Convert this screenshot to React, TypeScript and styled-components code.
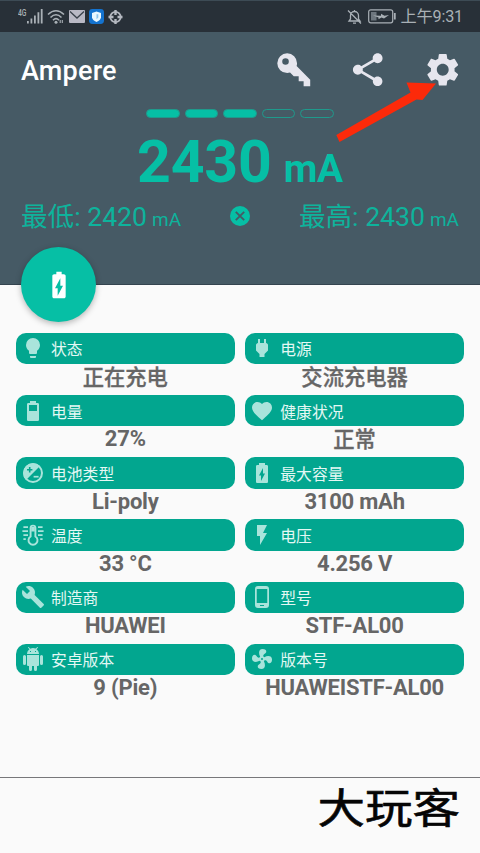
import React from 'react';
import styled, { createGlobalStyle } from 'styled-components';
import { MdSettings, MdShare, MdBuild, MdFavorite } from 'react-icons/md';

const GlobalStyle = createGlobalStyle`
  * { box-sizing: border-box; }
  body {
    margin: 0;
    background: #fafafa;
    font-family: Roboto, 'Noto Sans CJK SC', sans-serif;
  }
`;

const Screen = styled.div`
  position: relative;
  display: flex;
  flex-direction: column;
  width: 480px;
  height: 853px;
  overflow: hidden;
  background: #fafafa;
`;

const StatusBar = styled.div`
  display: flex;
  flex: none;
  align-items: center;
  justify-content: space-between;
  height: 32px;
  padding: 0 17px 0 18px;
  background: #283038;
  border-top: 1px solid #3d4b55;
  color: #a9b0b6;
`;

const StatusGroup = styled.div<{ $gap: number }>`
  display: flex;
  align-items: center;
  gap: ${(p) => p.$gap}px;
`;

const Clock = styled.span`
  margin-left: -1px;
  font-size: 16.2px;
  line-height: 20px;
  white-space: nowrap;
  letter-spacing: -0.2px;
  font-weight: 400;
`;

const Header = styled.header`
  flex: none;
  height: 253px;
  background: #465a65;
  border-bottom: 1px solid #34444f;
`;

const Toolbar = styled.div`
  display: flex;
  align-items: center;
  height: 76px;
  padding: 0 18px 0 21px;
`;

const Title = styled.h1`
  flex: 1;
  margin: 0;
  padding-top: 2px;
  color: #fff;
  font-size: 27px;
  font-weight: 500;
  letter-spacing: 0.2px;
  line-height: 32px;
`;

const Actions = styled.div`
  display: flex;
  gap: 35px;
  color: #e6e6ee;
  svg { display: block; }
`;

const Gauge = styled.div`
  display: flex;
  justify-content: center;
  gap: 5px;
  height: 9px;
  margin: 1px 0 0;
`;

const Segment = styled.div<{ $on: boolean }>`
  width: 33.6px;
  height: 9px;
  border: 1.4px solid #1f9a8c;
  border-radius: 4.5px;
  background: ${(p) => (p.$on ? '#06bfa5' : 'transparent')};
`;

const Reading = styled.div`
  display: flex;
  align-items: baseline;
  justify-content: center;
  gap: 12px;
  height: 79px;
  line-height: 88px;
  color: #06bfa5;
  font-size: 59px;
  font-weight: 700;
  letter-spacing: -0.2px;
`;

const ReadingUnit = styled.span`
  font-size: 38.8px;
`;

const Extremes = styled.div`
  display: grid;
  grid-template-columns: 1fr 20px 1fr;
  align-items: center;
  height: 38px;
  padding: 0 21px;
  color: #0eb39c;
`;

const Extreme = styled.div<{ $end?: boolean }>`
  padding-top: 1px;
  font-size: 26.6px;
  line-height: 38px;
  white-space: nowrap;
  text-align: ${(p) => (p.$end ? 'right' : 'left')};
  small { margin-left: 5px; font-size: 19px; }
`;

const ResetButton = styled.div`
  display: flex;
  height: 20px;
  margin-bottom: 5px;
`;

const Fab = styled.div`
  display: flex;
  flex: none;
  align-items: center;
  justify-content: center;
  position: relative;
  width: 75px;
  height: 75px;
  margin: -38px 0 0 21px;
  border-radius: 50%;
  background: #06bfa5;
  box-shadow: 0 2px 6px rgba(0, 0, 0, 0.28);
  color: #fff;
`;

const Grid = styled.main`
  display: grid;
  grid-template-columns: 218.6px 218.6px;
  grid-auto-rows: 62.2px;
  column-gap: 10.7px;
  padding: 10.8px 0 0 16px;
`;

const Card = styled.section`
  display: flex;
  flex-direction: column;
`;

const Label = styled.div`
  display: flex;
  align-items: center;
  height: 31.4px;
  padding-left: 5px;
  gap: 6px;
  border-radius: 10px;
  background: #02a68f;
  color: #a9e4db;
  svg { flex: none; }
  span {
    padding-top: 4px;
    color: #e4f8f4;
    font-size: 15.8px;
    line-height: 24px;
  }
`;

const Value = styled.div<{ $cjk?: boolean }>`
  height: 30.8px;
  color: #666;
  font-size: ${(p) => (p.$cjk ? 21.3 : 22)}px;
  font-weight: ${(p) => (p.$cjk ? 500 : 700)};
  letter-spacing: ${(p) => (p.$cjk ? 0 : -0.22)}px;
  line-height: ${(p) => (p.$cjk ? 28 : 26)}px;
  -webkit-text-stroke: ${(p) => (p.$cjk ? '0.3px #666' : '0')};
  text-align: center;
  white-space: nowrap;
`;

const Footer = styled.footer`
  display: flex;
  justify-content: flex-end;
  height: 76px;
  margin-top: auto;
  padding-right: 20px;
  border-top: 1.5px solid #77777a;
`;

const Brand = styled.div`
  height: 56px;
  margin-top: -2px;
  color: #050505;
  font-family: 'Noto Sans CJK SC', sans-serif;
  font-size: 47.5px;
  font-weight: 400;
  -webkit-text-stroke: 0.7px #050505;
  line-height: 60px;
  transform: scaleY(0.86);
`;

const Pointer = styled.svg`
  position: absolute;
  left: 330px;
  top: 78px;
`;

const PATHS = {
  key: 'M22,18V22H18V19H15V16H12L9.74,13.74C9.19,13.91 8.61,14 8,14A6,6 0 0,1 2,8A6,6 0 0,1 8,2A6,6 0 0,1 14,8C14,8.61 13.91,9.19 13.74,9.74L22,18M7,5A2,2 0 0,0 5,7A2,2 0 0,0 7,9A2,2 0 0,0 9,7A2,2 0 0,0 7,5Z',
  bulb: 'M12,2A7,7 0 0,0 5,9C5,11.38 6.19,13.47 8,14.74V17A1,1 0 0,0 9,18H15A1,1 0 0,0 16,17V14.74C17.81,13.47 19,11.38 19,9A7,7 0 0,0 12,2M9,21A1,1 0 0,0 10,22H14A1,1 0 0,0 15,21V20H9V21Z',
  plug: 'M16,7V3H14V7H10V3H8V7H8C7,7 6,8 6,9V14.5L9.5,18V21H14.5V18L18,14.5V9C18,8 17,7 16,7Z',
  batteryHalf: 'M16,12H8V6H16M16.67,4H15V2H9V4H7.33C6.6,4 6,4.6 6,5.33V20.67C6,21.4 6.6,22 7.33,22H16.67A1.33,1.33 0 0,0 18,20.67V5.33C18,4.6 17.4,4 16.67,4',
  batteryCharging: 'M16.67,4H15V2H9V4H7.33A1.33,1.33 0 0,0 6,5.33V20.66C6,21.4 6.6,22 7.33,22H16.66C17.4,22 18,21.4 18,20.67V5.33C18,4.6 17.4,4 16.67,4M11,20V14.5H9L13,7V12.5H15',
  fabBattery: 'M15.67 4H14V2h-4v2H8.33C7.6 4 7 4.6 7 5.33v15.33C7 21.4 7.6 22 8.33 22h7.33c.74 0 1.34-.6 1.34-1.33V5.33C17 4.6 16.4 4 15.67 4zM11 20v-5.5H9L13 7v5.5h2L11 20z',
  flash: 'M7,2V13H10V22L17,10H13L17,2H7Z',
  phone: 'M17.25,18H6.75V4H17.25M14,21H10V20H14M16,1H8A3,3 0 0,0 5,4V20A3,3 0 0,0 8,23H16A3,3 0 0,0 19,20V4A3,3 0 0,0 16,1Z',
  android: 'M15,5H14V4H15M10,5H9V4H10M15.53,2.16L16.84,0.85C17.03,0.66 17.03,0.34 16.84,0.14C16.64,-0.05 16.32,-0.05 16.13,0.14L14.65,1.62C13.85,1.23 12.95,1 12,1C11.04,1 10.14,1.23 9.34,1.63L7.85,0.14C7.66,-0.05 7.34,-0.05 7.15,0.14C6.95,0.34 6.95,0.66 7.15,0.85L8.46,2.16C6.97,3.26 6,5 6,7H18C18,5 17,3.25 15.53,2.16M20.5,8A1.5,1.5 0 0,0 19,9.5V16.5A1.5,1.5 0 0,0 20.5,18A1.5,1.5 0 0,0 22,16.5V9.5A1.5,1.5 0 0,0 20.5,8M3.5,8A1.5,1.5 0 0,0 2,9.5V16.5A1.5,1.5 0 0,0 3.5,18A1.5,1.5 0 0,0 5,16.5V9.5A1.5,1.5 0 0,0 3.5,8M6,18A1,1 0 0,0 7,19H8V22.5A1.5,1.5 0 0,0 9.5,24A1.5,1.5 0 0,0 11,22.5V19H13V22.5A1.5,1.5 0 0,0 14.5,24A1.5,1.5 0 0,0 16,22.5V19H17A1,1 0 0,0 18,18V8H6V18Z',
  fan: 'M12,11A1,1 0 0,0 11,12A1,1 0 0,0 12,13A1,1 0 0,0 13,12A1,1 0 0,0 12,11M12.5,2C17,2 17.11,5.57 14.75,6.75C13.76,7.24 13.32,8.29 13.13,9.22C13.61,9.42 14.03,9.73 14.35,10.13C18.05,8.13 22.03,8.92 22.03,12.5C22.03,17 18.46,17.1 17.28,14.73C16.78,13.74 15.72,13.3 14.79,13.11C14.59,13.59 14.28,14 13.88,14.34C15.87,18.03 15.08,22 11.5,22C7,22 6.91,18.42 9.27,17.24C10.25,16.75 10.69,15.71 10.89,14.79C10.4,14.59 9.97,14.27 9.65,13.87C5.96,15.85 2,15.07 2,11.5C2,7 5.56,6.89 6.74,9.26C7.24,10.25 8.29,10.68 9.22,10.87C9.41,10.39 9.73,9.97 10.14,9.65C8.15,5.96 8.94,2 12.5,2Z',
};

const Glyph = ({ d, size = 24 }: { d: string; size?: number }) => (
  <svg width={size} height={size} viewBox="0 0 24 24" fill="currentColor" fillRule="evenodd">
    <path d={d} />
  </svg>
);

const PolarityIcon = () => (
  <svg width="24" height="24" viewBox="0 0 24 24" fill="none" stroke="currentColor">
    <circle cx="12" cy="12" r="9" strokeWidth="2" />
    <path d="M5 19A9.9 9.9 0 0 1 19 5Z" fill="currentColor" stroke="none" />
    <path d="M6 8.7h5.4M8.7 6v5.4" stroke="#02a68f" strokeWidth="1.6" />
    <path d="M12.6 15.7h5" strokeWidth="1.7" />
  </svg>
);

const ThermometerIcon = () => (
  <svg width="24" height="24" viewBox="0 0 24 24" fill="none" stroke="currentColor">
    <path d="M9.6 13.5V5a2.4 2.4 0 0 1 4.8 0v8.5a4.5 4.5 0 1 1-4.8 0Z" strokeWidth="1.9" />
    <path d="M10.2 4h3.6v4.5h-3.6z" fill="currentColor" stroke="none" />
    <path d="M2.4 4.2h4.6M1.4 8.2H7M2.4 12.2H7M2.4 16.2h2.4M17 4.2h4.6M17 8.2h5.6M17 12.2h4.6M19.2 16.2h2.4" strokeWidth="1.7" />
  </svg>
);

const SignalIcon = () => (
  <svg width="25" height="18" viewBox="0 0 25 18" fill="currentColor">
    <text x="0" y="7.5" fontSize="8.5" fontWeight="500" textLength="8.5" lengthAdjust="spacingAndGlyphs">4G</text>
    <path d="M9 13h1.8v2.5H9zM12.5 10.5h1.8v5h-1.8zM16 7.5h1.8v8H16zM19.5 4.3h1.8v11.2h-1.8zM22.8 1h1.8v14.5h-1.8z" />
  </svg>
);

const WifiIcon = () => (
  <svg width="18" height="16" viewBox="0 0 18 16" fill="none" stroke="currentColor" strokeWidth="1.6">
    <path d="M1 5.5Q9 -2 17 5.5M3.5 8.5Q9 3 14.5 8.5M6 11.3Q9 8 12 11.3" />
    <circle cx="9" cy="13.2" r="1.5" fill="currentColor" stroke="none" />
    <path d="M13.2 11v3M15.3 11v3" strokeWidth="1.1" />
  </svg>
);

const MailIcon = () => (
  <svg width="16" height="13" viewBox="0 0 16 13">
    <rect width="16" height="13" rx="1" fill="#b9b9c5" />
    <path d="M1 1.5 8 8l7-6.5" fill="none" stroke="#3a424c" strokeWidth="1.3" />
  </svg>
);

const ShieldIcon = () => (
  <svg width="15" height="15" viewBox="0 0 15 15">
    <rect width="15" height="15" rx="3.4" fill="#1473cf" />
    <path d="M7.5 2.6 12 4v4.2q-.4 3-4.5 4.8Q3.4 11.2 3 8.2V4Z" fill="#e9f7ff" />
    <path d="M7.5 5.2v5l1.800-1.800V5.200Z" fill="#8cc4ec" />
  </svg>
);

const TargetIcon = () => (
  <svg width="15" height="14" viewBox="0 0 15 14" fill="none" stroke="#b4b8c0">
    <circle cx="7.5" cy="7" r="5.2" strokeWidth="1.8" />
    <path d="M7.5 0v5M7.5 9v5M.5 7h5M9.5 7h5" strokeWidth="2.4" />
  </svg>
);

const BellOffIcon = () => (
  <svg width="15" height="16" viewBox="0 0 15 16" fill="none" stroke="currentColor" strokeWidth="1.3">
    <path d="M2 12h11l-1.5-2V6.5a4 4 0 0 0-8 0V10ZM6 14.2h3M7.5 2.5V1M1 1.5 14 14.5" />
  </svg>
);

const StatusBattery = () => (
  <svg width="28" height="15" viewBox="0 0 28 15" fill="none" stroke="currentColor" strokeWidth="1.2">
    <rect x=".7" y=".8" width="24" height="13" rx="2" />
    <path d="M3 3h5.5v8.5H3z" fill="#6d767e" stroke="none" />
    <path d="M26.800 4v6.500" strokeWidth="1.8" />
    <path d="m5 6.500 8 .2v-2l3.500 2 4.500-.7-5 3.500-2.500-1-3 1.700V8.500Z" fill="currentColor" stroke="none" />
  </svg>
);

const ClearIcon = () => (
  <svg width="20" height="20" viewBox="0 0 20 20">
    <circle cx="10" cy="10" r="10" fill="#06bfa5" />
    <path d="m5.8 5.8 8.4 8.4M14.2 5.8l-8.4 8.4" stroke="#465a65" strokeWidth="1.9" />
  </svg>
);

type Item = { icon: React.ReactNode; label: string; value: string; cjk?: boolean };

const ITEMS: Item[] = [
  { icon: <Glyph d={PATHS.bulb} />, label: '状态', value: '正在充电', cjk: true },
  { icon: <Glyph d={PATHS.plug} />, label: '电源', value: '交流充电器', cjk: true },
  { icon: <Glyph d={PATHS.batteryHalf} />, label: '电量', value: '27%' },
  { icon: <MdFavorite size={24} />, label: '健康状况', value: '正常', cjk: true },
  { icon: <PolarityIcon />, label: '电池类型', value: 'Li-poly' },
  { icon: <Glyph d={PATHS.batteryCharging} />, label: '最大容量', value: '3100 mAh' },
  { icon: <ThermometerIcon />, label: '温度', value: '33 °C' },
  { icon: <Glyph d={PATHS.flash} />, label: '电压', value: '4.256 V' },
  { icon: <MdBuild size={24} />, label: '制造商', value: 'HUAWEI' },
  { icon: <Glyph d={PATHS.phone} />, label: '型号', value: 'STF-AL00' },
  { icon: <Glyph d={PATHS.android} />, label: '安卓版本', value: '9 (Pie)' },
  { icon: <Glyph d={PATHS.fan} />, label: '版本号', value: 'HUAWEISTF-AL00' },
];

export default function App() {
  return (
    <Screen>
      <GlobalStyle />
      <StatusBar>
        <StatusGroup $gap={4}>
          <SignalIcon />
          <WifiIcon />
          <MailIcon />
          <ShieldIcon />
          <TargetIcon />
        </StatusGroup>
        <StatusGroup $gap={6}>
          <BellOffIcon />
          <StatusBattery />
          <Clock>上午9:31</Clock>
        </StatusGroup>
      </StatusBar>
      <Header>
        <Toolbar>
          <Title>Ampere</Title>
          <Actions>
            <Glyph d={PATHS.key} size={39.5} />
            <MdShare size={39.5} />
            <MdSettings size={39.5} />
          </Actions>
        </Toolbar>
        <Gauge>
          {[true, true, true, false, false].map((on, i) => (
            <Segment key={i} $on={on} />
          ))}
        </Gauge>
        <Reading>
          2430<ReadingUnit>mA</ReadingUnit>
        </Reading>
        <Extremes>
          <Extreme>最低: 2420<small>mA</small></Extreme>
          <ResetButton>
            <ClearIcon />
          </ResetButton>
          <Extreme $end>最高: 2430<small>mA</small></Extreme>
        </Extremes>
      </Header>
      <Fab>
        <Glyph d={PATHS.fabBattery} size={32} />
      </Fab>
      <Grid>
        {ITEMS.map((item) => (
          <Card key={item.label}>
            <Label>
              {item.icon}
              <span>{item.label}</span>
            </Label>
            <Value $cjk={item.cjk}>{item.value}</Value>
          </Card>
        ))}
      </Grid>
      <Footer>
        <Brand>大玩客</Brand>
      </Footer>
      <Pointer width="110" height="68" viewBox="0 0 110 68">
        <path d="M6.3 57 80.5 14.5 76.5 4.5 106 5.5 92.5 22 86.5 21.5 9.5 64Z" fill="#fc2a0a" />
      </Pointer>
    </Screen>
  );
}
